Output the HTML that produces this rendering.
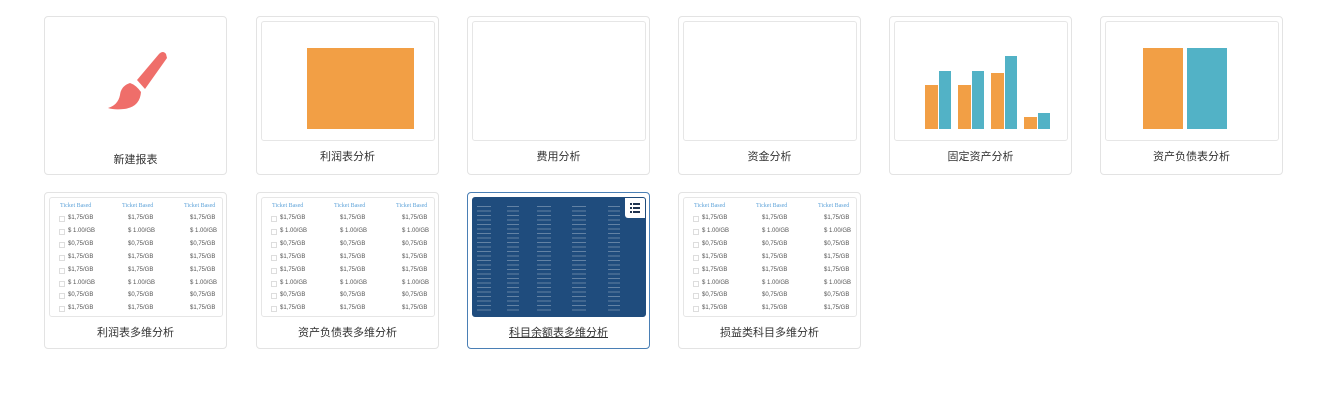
<!DOCTYPE html>
<html><head><meta charset="utf-8"><style>
body{margin:0;width:1327px;height:400px;background:#fff;position:relative;overflow:hidden;font-family:"Liberation Sans","Noto Sans CJK SC",sans-serif;}
.card{position:absolute;width:183px;border:1px solid #e3e3e3;border-radius:4px;background:#fff;box-sizing:border-box;}
.r1{top:16px;height:159px}
.r2{top:192px;height:157px}
.inner{position:absolute;left:4px;top:4px;width:174px;height:120px;border:1px solid #e6e6e6;border-radius:3px;box-sizing:border-box;background:#fff;overflow:hidden}
.lbl{position:absolute;left:0;right:0;text-align:center;font-size:11px;color:#333}
.r1 .lbl{top:131px}
.r2 .lbl{top:131px}
.b{position:absolute}
.o{background:#f29f45}.c{background:#52b2c6}
.tb{position:absolute;font-size:6px;color:#555;white-space:nowrap}
.hd{position:absolute;top:5px;font-family:"Liberation Serif",serif;font-size:6px;color:#5ea3d9}
.col{position:absolute;top:6px;height:108px;background:repeating-linear-gradient(#fff0 0 2px,rgba(255,255,255,.3) 2px 3px,#fff0 3px 4.5px)}
</style></head><body>

<div class="card r1" style="left:44px">
 <svg style="position:absolute;left:45px;top:30px" width="80" height="70" viewBox="0 0 80 70">
  <path d="M47 33 L69 7 Q73 3 76 7 L77 11 L55 42 Z" fill="#ef6e6a"/>
  <path d="M40 36 Q46 38 51 45 Q50 60 34 62 Q24 63 18 61 Q28 58 30 48 Q31 39 40 36 Z" fill="#ef6e6a"/>
 </svg>
 <div class="lbl" style="top:134px">新建报表</div>
</div>

<div class="card r1" style="left:256px">
 <div class="inner"><div class="b o" style="left:45px;top:26px;width:107px;height:81px"></div></div>
 <div class="lbl">利润表分析</div>
</div>
<div class="card r1" style="left:467px"><div class="inner"></div><div class="lbl">费用分析</div></div>
<div class="card r1" style="left:678px"><div class="inner"></div><div class="lbl">资金分析</div></div>
<div class="card r1" style="left:889px">
 <div class="inner">
  <div class="b o" style="left:30px;top:63px;width:13px;height:44px"></div>
  <div class="b c" style="left:44px;top:49px;width:12px;height:58px"></div>
  <div class="b o" style="left:63px;top:63px;width:13px;height:44px"></div>
  <div class="b c" style="left:77px;top:49px;width:12px;height:58px"></div>
  <div class="b o" style="left:96px;top:51px;width:13px;height:56px"></div>
  <div class="b c" style="left:110px;top:34px;width:12px;height:73px"></div>
  <div class="b o" style="left:129px;top:95px;width:13px;height:12px"></div>
  <div class="b c" style="left:143px;top:91px;width:12px;height:16px"></div>
 </div>
 <div class="lbl">固定资产分析</div>
</div>
<div class="card r1" style="left:1100px">
 <div class="inner">
  <div class="b o" style="left:37px;top:26px;width:40px;height:81px"></div>
  <div class="b c" style="left:81px;top:26px;width:40px;height:81px"></div>
 </div>
 <div class="lbl">资产负债表分析</div>
</div>

<div class="card r2" style="left:44px"><div class="inner" id="t1"></div><div class="lbl">利润表多维分析</div></div>
<div class="card r2" style="left:256px"><div class="inner" id="t2"></div><div class="lbl">资产负债表多维分析</div></div>
<div class="card r2" style="left:467px;border-color:#4a7fb5">
 <div class="inner" style="background:#1f4c7d;border-color:#1f4c7d">
  <div class="col" style="left:4px;width:14px"></div>
  <div class="col" style="left:34px;width:12px"></div>
  <div class="col" style="left:64px;width:14px"></div>
  <div class="col" style="left:99px;width:14px"></div>
  <div class="col" style="left:135px;width:12px"></div>
  <div style="position:absolute;right:0;top:0;width:20px;height:20px;background:#fff;border-radius:0 0 0 3px">
   <svg width="20" height="20"><g fill="#1f3350"><rect x="5" y="5" width="2" height="2"/><rect x="8" y="5" width="7" height="2"/><rect x="5" y="9" width="2" height="2"/><rect x="8" y="9" width="7" height="2"/><rect x="5" y="13" width="2" height="2"/><rect x="8" y="13" width="7" height="2"/></g></svg>
  </div>
 </div>
 <div class="lbl" style="text-decoration:underline">科目余额表多维分析</div>
</div>
<div class="card r2" style="left:678px"><div class="inner" id="t4"></div><div class="lbl">损益类科目多维分析</div></div>

<script>
var v=["$1,75/GB","$ 1.00/GB","$0,75/GB","$1,75/GB","$1,75/GB","$ 1.00/GB","$0,75/GB","$1,75/GB"];
["t1","t2","t4"].forEach(function(id){
 var e=document.getElementById(id),h="";
 [10,72,134].forEach(function(x){h+='<div class="hd" style="left:'+x+'px">Ticket Based</div>';});
 v.forEach(function(s,i){var y=17+i*12.9;
  h+='<div class="tb" style="left:9px;top:'+(y+1)+'px;width:4px;height:4px;border:1px solid #ddd"></div>';
  h+='<div class="tb" style="left:18px;top:'+y+'px">'+s+'</div>';
  h+='<div class="tb" style="left:78px;top:'+y+'px">'+s+'</div>';
  h+='<div class="tb" style="left:140px;top:'+y+'px">'+s+'</div>';});
 e.innerHTML=h;});
</script>
</body></html>
